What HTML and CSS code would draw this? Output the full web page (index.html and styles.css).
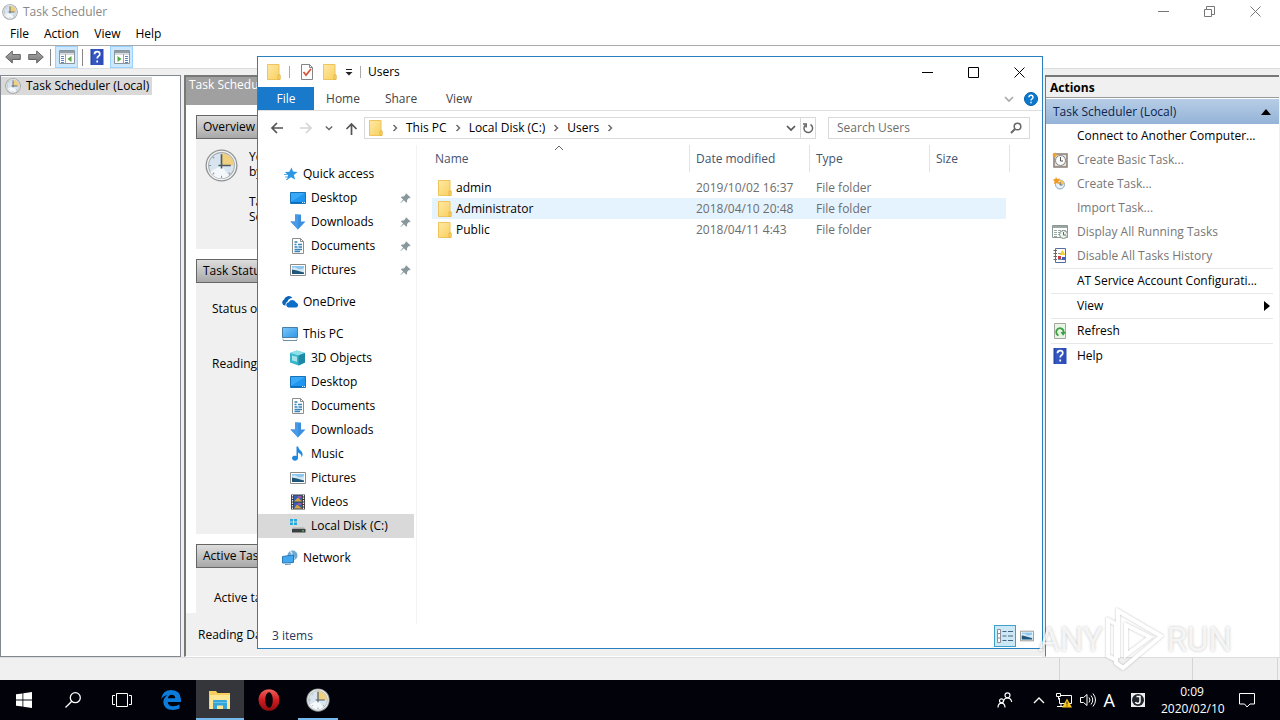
FILE: index.html
```html
<!DOCTYPE html>
<html lang="en">
<head>
  <meta charset="UTF-8">
  <meta name="viewport" content="width=device-width, initial-scale=1">
  <title>Task Scheduler</title>
  <link rel="stylesheet" href="styles.css">
</head>
<body>

  <!-- shared icons -->
  <svg class="sprite" aria-hidden="true">
    <defs>
      <linearGradient id="gFolder" x1="0" y1="0" x2="1" y2="1"><stop offset="0" stop-color="#ffe9a6"/><stop offset="1" stop-color="#f8cf5c"/></linearGradient>
      <linearGradient id="gScreen" x1="0" y1="0" x2="1" y2="1"><stop offset="0" stop-color="#7cc8fb"/><stop offset="1" stop-color="#2d96e6"/></linearGradient>
      <linearGradient id="gHelp" x1="0" y1="0" x2="1" y2="0"><stop offset="0" stop-color="#1c3c9c"/><stop offset=".2" stop-color="#3659c4"/><stop offset="1" stop-color="#2b4bb4"/></linearGradient>
      <linearGradient id="gArrow" x1="0" y1="0" x2="0" y2="1"><stop offset="0" stop-color="#aaa"/><stop offset="1" stop-color="#777"/></linearGradient>
      <linearGradient id="gOpera" x1="0" y1="0" x2="0" y2="1"><stop offset="0" stop-color="#f0625c"/><stop offset=".5" stop-color="#d01c20"/><stop offset="1" stop-color="#8d0d10"/></linearGradient>
    </defs>
    <symbol id="clock" viewBox="0 0 32 32">
      <circle cx="16" cy="16" r="15.500" fill="#8d9194"/>
      <circle cx="16" cy="16" r="14.300" fill="#f3f3f0"/>
      <circle cx="16" cy="16" r="12.500" fill="#d8e5ef" stroke="#a6adb3"/>
      <path d="M16 16 5 22a12 12 0 0 0 18 4z" fill="#f4f8fb"/>
      <path d="M16 16V4a12 12 0 0 1 12 12z" fill="#efcf80"/>
      <path d="M16 5v14M13 16h12" stroke="#4e5a64" stroke-width="1.600"/>
      <path d="M16 26v2M4 16h2M7.500 7.500l1.500 1.500M24.500 24.500 23 23M7.500 24.500 9 23" stroke="#8a98a4"/>
    </symbol>
    <symbol id="folder" viewBox="0 0 16 16">
      <path d="M1.500.5H13V11h1v4.500H1.500z" fill="url(#gFolder)" stroke="#eec45b"/>
      <path d="M12 15.500V11h2v4.500z" fill="#ffd96b" stroke="#dfae3e" stroke-width=".7"/>
    </symbol>
    <symbol id="helpbook" viewBox="0 0 16 16">
      <path d="M1.500 0h13v16h-13z" fill="url(#gHelp)"/>
      <path d="M5.500 5.200q0-2.600 2.700-2.600 2.600 0 2.600 2.300 0 1.500-1.400 2.400-1.200.8-1.200 2.200M8.200 11.500v2" fill="none" stroke="#fff" stroke-width="1.700"/>
    </symbol>
    <symbol id="desktop" viewBox="0 0 16 16">
      <path d="M.5 2.500h15v11H.5z" fill="#1e96f0" stroke="#1673b8"/>
      <path d="M1 3h14L1 12z" fill="#39a8f8"/>
      <path d="M1 12.500h11" stroke="#0b6bbd"/><path d="M12 12.500h3" stroke="#d8efff" stroke-dasharray="1 1"/>
    </symbol>
    <symbol id="download" viewBox="0 0 16 16">
      <path d="M5 .5h6v7h4.500L8 15.500.5 7.500H5z" fill="#3a8fe0"/><path d="M5 .5h3v15L.5 7.500H5z" fill="#4b9ae5"/>
    </symbol>
    <symbol id="document" viewBox="0 0 16 16">
      <path d="M2.500.5h8l3 3v12h-11z" fill="#fff" stroke="#8d8d8d"/><path d="M10.500.5v3h3" fill="none" stroke="#8d8d8d"/>
      <path d="M4.500 4h3M4.500 6.500h2M8 6.500h4M4.500 9h3M8.500 9H12M4.500 11.500H12M4.500 13.500H10" stroke="#3483bd" stroke-width="1.300"/>
    </symbol>
    <symbol id="picture" viewBox="0 0 16 16">
      <path d="M.5 2.500h15v11H.5z" fill="#fff" stroke="#8b8b8b"/>
      <path d="M2 4h12v8H2z" fill="#8cc5ee"/><path d="M2 6q3-2 6 1 3 1 6-1V12H2z" fill="#d4e9f6"/><path d="M2 7.500q4 .5 12 3V12H2z" fill="#1f5679"/>
    </symbol>
    <symbol id="pc" viewBox="0 0 16 16">
      <path d="M.5 1.500h15v10H.5z" fill="url(#gScreen)" stroke="#4a7da5"/><path d="M1 14.500h14" stroke="#6d91ad"/><path d="M0 13.200h2M14 13.200h2" stroke="#a9c4d8"/>
    </symbol>
    <symbol id="pin" viewBox="0 0 12 12">
      <path d="m7 .5 4.500 4.500-1 .7-.9-.2-1.900 2 .1 2-1 1-2.500-2.600-3.400 3-.4-.4 3-3.400L1 4.800l1-1 2 .1 2-1.900-.2-.8z" fill="#8a979f"/>
    </symbol>
    <symbol id="chev" viewBox="0 0 8 8"><path d="M2.500 1 5.500 4l-3 3" fill="none" stroke="#6e6e6e" stroke-width="1.500"/></symbol>
    <symbol id="chevdown" viewBox="0 0 10 10"><path d="m1 3 4 4 4-4" fill="none" stroke="currentColor" stroke-width="1.700"/></symbol>
    <symbol id="pane" viewBox="0 0 16 16">
      <path d="M.5 1.500h15v13H.5z" fill="#fff" stroke="#8a949b"/><path d="M1 2h14v2H1z" fill="#929da5"/><path d="M1 5h14" stroke="#b2b8bc"/>
      <path d="M2 7.500h3M2 9.500h3M2 11.500h3M2 13.500h3" stroke="#5b85b4"/><path d="M6.500 5v9" stroke="#9ba4aa"/><path d="m12.500 7-4 3 4 3z" fill="#57a744"/>
    </symbol>
    <symbol id="cliparrow" viewBox="0 0 16 14"><path d="m.7 7 6.600-6v3.500h8v5h-8V13z" fill="url(#gArrow)" stroke="#666"/></symbol>
  </svg>

  <div class="desktop">

    <main class="scheduler">
      <header class="titlebar">
        <svg class="icon"><use href="#clock"/></svg>
        <span>Task Scheduler</span>
        <div class="winbuttons">
          <button aria-label="Minimize"><svg viewBox="0 0 11 11"><path d="M0 5.500h11"/></svg></button>
          <button aria-label="Restore"><svg viewBox="0 0 11 11"><path d="M.5 3.500h7v7h-7zM2.500 3.500v-3h8v8h-3"/></svg></button>
          <button aria-label="Close"><svg viewBox="0 0 11 11"><path d="m.5.500 10 10m0-10-10 10"/></svg></button>
        </div>
      </header>

      <nav class="menubar">
        <button>File</button><button>Action</button><button>View</button><button>Help</button>
      </nav>

      <div class="toolbar">
        <button aria-label="Back"><svg class="icon"><use href="#cliparrow"/></svg></button>
        <button aria-label="Forward"><svg class="icon flip"><use href="#cliparrow"/></svg></button>
        <span class="sep"></span>
        <button class="on" aria-label="Show console tree"><svg class="icon"><use href="#pane"/></svg></button>
        <span class="sep"></span>
        <button aria-label="Help"><svg class="icon"><use href="#helpbook"/></svg></button>
        <button class="on" aria-label="Show action pane"><svg class="icon flip"><use href="#pane"/></svg></button>
      </div>

      <div class="panes">
        <aside class="tree">
          <button class="tree-item"><svg class="icon"><use href="#clock"/></svg>Task Scheduler (Local)</button>
        </aside>

        <section class="summary">
          <h2>Task Scheduler</h2>
          <div class="cards">
            <section class="card">
              <h3>Overview of</h3>
              <div class="card-body overview">
                <svg class="bigclock"><use href="#clock"/></svg>
                <div>
                  <p>You<br>by</p>
                  <p>Tasks<br>See</p>
                </div>
              </div>
            </section>
            <section class="card grow">
              <h3>Task Status</h3>
              <div class="card-body status">
                <p>Status of</p>
                <p>Reading</p>
              </div>
            </section>
            <section class="card last">
              <h3>Active Tasks</h3>
              <div class="card-body active">
                <p>Active tasks</p>
              </div>
            </section>
          </div>
          <footer>Reading Data</footer>
        </section>

        <aside class="actions">
          <h2>Actions</h2>
          <button class="group">Task Scheduler (Local)<svg viewBox="0 0 10 6"><path d="M0 6 5 0l5 6z"/></svg></button>
          <div class="action-list">
            <button><span class="slot"></span>Connect to Another Computer...</button>
            <button disabled><svg class="icon" viewBox="0 0 16 16"><path d="M2 2h13v13H2z" fill="#e2dfda" stroke="#897f78" stroke-width="1.500"/><circle cx="8.500" cy="8.500" r="5" fill="#fafafa" stroke="#858585"/><path d="M8.500 5v4H11" fill="none" stroke="#555"/><path d="m3 0 1 2.200L6 3 4 4 3 6 2 4 0 3l2-.8z" fill="#f7a427"/></svg>Create Basic Task...</button>
            <button disabled><svg class="icon" viewBox="0 0 16 16"><circle cx="8" cy="8.500" r="4.500" fill="#eaf2f8" stroke="#82a9c6"/><path d="M8 8.500V4a4.500 4.500 0 0 1 4.500 4.500z" fill="#f6c261"/><path d="M8 6v3h2.500" fill="none" stroke="#4c6d87"/><path d="m4 1 1.200 2L8 2.500 6.500 5 7 8 4.500 7 2 8l.5-2.500L1 3.500 3.200 3z" fill="#f29b21"/></svg>Create Task...</button>
            <button disabled><span class="slot"></span>Import Task...</button>
            <button disabled><svg class="icon" viewBox="0 0 16 16"><path d="M.5 1.500h15v12H.5z" fill="#fff" stroke="#8b9790"/><path d="M1 2h14v2H1z" fill="#9ba7a4"/><path d="M2 6.500h3m1 0h3m1 0h4M2 8.500h3m1 0h3M2 10.500h3m1 0h2M2 12.500h3" stroke="#9aa"/><circle cx="11.500" cy="10.500" r="4" fill="#eef3ee" stroke="#819183"/><path d="M11.500 8v3H14" fill="none" stroke="#5c705f"/></svg>Display All Running Tasks</button>
            <button disabled><svg class="icon" viewBox="0 0 16 16"><path d="M3.500.5h10v14h-10z" fill="#fff" stroke="#596d9b"/><path d="M1.500 2.500H5M1.500 5.500H5M1.500 8.500H5M1.500 11.500H5" stroke="#666"/><path d="M6 11.500h6M6 5.500h3M6 8.500h2" stroke="#7b8cb1"/><path d="m10.500 2 3 5h-6z" fill="#f2ce2e"/><path d="M6 8h3v3H6z" fill="#cc3a40"/><path d="M10 9h3v3h-3z" fill="#3f5fae"/></svg>Disable All Tasks History</button>
            <hr>
            <button><span class="slot"></span>AT Service Account Configurati...</button>
            <hr>
            <button><span class="slot"></span>View<svg class="more" viewBox="0 0 6 10"><path d="m0 0 6 5-6 5z"/></svg></button>
            <hr>
            <button><svg class="icon" viewBox="0 0 16 16"><path d="M2.500.5h11v15h-11z" fill="#e8f4e4" stroke="#a0a8a0"/><path d="M6.500 12.500q-3-1.500-2-5 1.500-3 4.500-2.200 3 1 2.500 4.200" fill="none" stroke="#3ba044" stroke-width="1.800"/><path d="M8.500 9h5.500l-3 3.700z" fill="#3ba044"/></svg>Refresh</button>
            <hr>
            <button><svg class="icon"><use href="#helpbook"/></svg>Help</button>
          </div>
        </aside>
      </div>

      <div class="statusbar"><span></span><span></span></div>
    </main>

    <section class="explorer">
      <header class="ex-title">
        <svg class="icon"><use href="#folder"/></svg>
        <span class="sep"></span>
        <button aria-label="Properties"><svg class="icon" viewBox="0 0 16 16"><path d="M2.500.5h8l3 3v12h-11z" fill="#fff" stroke="#858585"/><path d="M10.500.5v3h3" fill="none" stroke="#858585"/><path d="m4.500 8 2.500 3 5-6" fill="none" stroke="#d8573c" stroke-width="1.800"/></svg></button>
        <button aria-label="New folder"><svg class="icon"><use href="#folder"/></svg></button>
        <button class="customize" aria-label="Customize toolbar"><svg viewBox="0 0 8 8"><path d="M1 1.500h6" stroke="#222"/><path d="M.5 4h7L4 7.500z" fill="#222"/></svg></button>
        <span class="sep"></span>
        <span>Users</span>
        <div class="winbuttons">
          <button aria-label="Minimize"><svg viewBox="0 0 11 11"><path d="M0 5.500h11"/></svg></button>
          <button aria-label="Maximize"><svg viewBox="0 0 11 11"><path d="M.5.500h10v10H.5z"/></svg></button>
          <button aria-label="Close"><svg viewBox="0 0 11 11"><path d="m.5.500 10 10m0-10-10 10"/></svg></button>
        </div>
      </header>

      <nav class="ribbon">
        <button class="file">File</button><button>Home</button><button>Share</button><button>View</button>
        <div class="ribbon-right">
          <svg class="expand"><use href="#chevdown"/></svg>
          <svg class="helpdot" viewBox="0 0 14 14"><circle cx="7" cy="7" r="6.500" fill="#0b78cf" stroke="#075fa8"/><path d="M5 5.300Q5 3.300 7 3.300t2 1.900Q9 6.200 8 6.800 7 7.300 7 8.500M7 9.700v1.500" fill="none" stroke="#fff" stroke-width="1.400"/></svg>
        </div>
      </nav>

      <div class="address-row">
        <button class="back" aria-label="Back"><svg viewBox="0 0 14 12"><path d="M13 6H2m5-5L2 6l5 5"/></svg></button>
        <button class="forward" aria-label="Forward"><svg viewBox="0 0 14 12"><path d="M1 6h11M7 1l5 5-5 5"/></svg></button>
        <button class="recent" aria-label="Recent"><svg><use href="#chevdown"/></svg></button>
        <button class="up" aria-label="Up"><svg viewBox="0 0 12 13"><path d="M6 13V2M1 7l5-5 5 5"/></svg></button>
        <div class="address">
          <svg class="icon"><use href="#folder"/></svg>
          <svg class="chev"><use href="#chev"/></svg>
          <button>This PC</button>
          <svg class="chev"><use href="#chev"/></svg>
          <button>Local Disk (C:)</button>
          <svg class="chev"><use href="#chev"/></svg>
          <button>Users</button>
          <svg class="chev"><use href="#chev"/></svg>
          <button class="drop" aria-label="Previous locations"><svg><use href="#chevdown"/></svg></button>
          <button class="reload" aria-label="Refresh"><svg viewBox="0 0 12 12"><path d="M8.500 2.500A4.300 4.300 0 1 1 3.200 3.200M1 2h3.200v3.500" fill="none" stroke="#666" stroke-width="1.500"/></svg></button>
        </div>
        <label class="search">
          <input type="text" placeholder="Search Users" aria-label="Search Users">
          <svg viewBox="0 0 12 12"><circle cx="7.500" cy="4.500" r="3.300" fill="none" stroke="#666" stroke-width="1.500"/><path d="M5 7 1 11" stroke="#666" stroke-width="2"/></svg>
        </label>
      </div>

      <div class="ex-body">
        <nav class="places">
          <ul>
            <li class="root"><svg class="icon" viewBox="0 0 16 16"><path d="m9.500 1.500 1.500 4 4.500.5-3.700 3 1.400 4.500L9 11.200l-4 2.500L6 9 3 6l4.400-.3z" fill="#2b97e4"/><path d="M2 8.500h4M3 11h3M4 13.500h2" stroke="#57b0ef"/></svg>Quick access</li>
            <li><svg class="icon"><use href="#desktop"/></svg>Desktop<svg class="pin"><use href="#pin"/></svg></li>
            <li><svg class="icon"><use href="#download"/></svg>Downloads<svg class="pin"><use href="#pin"/></svg></li>
            <li><svg class="icon"><use href="#document"/></svg>Documents<svg class="pin"><use href="#pin"/></svg></li>
            <li><svg class="icon"><use href="#picture"/></svg>Pictures<svg class="pin"><use href="#pin"/></svg></li>
          </ul>
          <ul>
            <li class="root"><svg class="icon" viewBox="0 0 16 16"><path d="M3.500 11.500H2.800A3 3 0 0 1 2 5.800 4.800 4.800 0 0 1 10.500 4q-4 .2-5 3.500-2.300.8-2 4z" fill="#0a64b8"/><path d="M7 13.500a2.600 2.600 0 0 1-.3-5.200A4 4 0 0 1 14 8.500a2.600 2.600 0 0 1 .3 5z" fill="#0a6fcb"/></svg>OneDrive</li>
          </ul>
          <ul>
            <li class="root"><svg class="icon"><use href="#pc"/></svg>This PC</li>
            <li><svg class="icon" viewBox="0 0 16 16"><path d="m0 3 7-2.500L15 3v9.500L8.500 15.500 0 12.500z" fill="#37b5c9"/><path d="m0 3 7-2.500L15 3 8.500 5.500z" fill="#8ee0e8"/><path d="M8.500 5.500 15 3v9.500l-6.500 3z" fill="#1d8aa5"/><path d="m2 5.500 5 1.300v5L2 10.500z" fill="#a5e3ea"/></svg>3D Objects</li>
            <li><svg class="icon"><use href="#desktop"/></svg>Desktop</li>
            <li><svg class="icon"><use href="#document"/></svg>Documents</li>
            <li><svg class="icon"><use href="#download"/></svg>Downloads</li>
            <li><svg class="icon" viewBox="0 0 16 16"><path d="M6.500.5H8q.5 2.500 3 4.500 3 3 .5 6.500.5-3.500-3.500-5V12a3 2.500 0 1 1-1.500-2z" fill="#1e88e0"/></svg>Music</li>
            <li><svg class="icon"><use href="#picture"/></svg>Pictures</li>
            <li><svg class="icon" viewBox="0 0 16 16"><path d="M1 .5h14v15H1z" fill="#3a3a3a"/><path d="M2.500 1v14M13.500 1v14" stroke="#eee" stroke-width="1.200" stroke-dasharray="1.500 1"/><path d="M4 1.500h8v6H4zM4 8.500h8v6H4z" fill="#355fb5"/><path d="m4 7.500 4-4 4 4zM4 14.500l3-4 5 4z" fill="#d9a53a"/><path d="M8 2h3v2H8zM8 9h3v2H8z" fill="#8f5bb0"/></svg>Videos</li>
            <li class="selected"><svg class="icon" viewBox="0 0 16 16"><path d="M0 1h3v2.500H0zM4 1h3v2.500H4zM0 4.500h3V7H0zM4 4.500h3V7H4z" fill="#23a8df"/><path d="m3 9.500 11 0 1.500 2H2z" fill="#a7aaac"/><path d="M2 11h13.500v3.500H2z" fill="#3c3f42"/><path d="M12 12.800h2" stroke="#67d36f"/></svg>Local Disk (C:)</li>
          </ul>
          <ul>
            <li class="root"><svg class="icon" viewBox="0 0 16 16"><circle cx="10.500" cy="5.500" r="5" fill="#70a9d0"/><path d="M8 1.500q3 1 1 4 3 0 3 4" fill="none" stroke="#cde4f2" stroke-width="1.500"/><path d="M.5 6.500 11.500 5v7.500l-11 .5z" fill="#41a8ef" stroke="#2978b5"/><path d="m3 14.500 6-.5" stroke="#5a8db2"/></svg>Network</li>
          </ul>
        </nav>

        <div class="files">
          <table>
            <thead>
              <tr><th class="name">Name<svg class="sort" viewBox="0 0 10 6"><path d="m1 5 4-4 4 4" fill="none" stroke="#666"/></svg></th><th class="mid">Date modified</th><th class="mid">Type</th><th class="size">Size</th></tr>
            </thead>
            <tbody>
              <tr><td><svg class="icon"><use href="#folder"/></svg>admin</td><td>2019/10/02 16:37</td><td>File folder</td><td></td></tr>
              <tr class="hover"><td><svg class="icon"><use href="#folder"/></svg>Administrator</td><td>2018/04/10 20:48</td><td>File folder</td><td></td></tr>
              <tr><td><svg class="icon"><use href="#folder"/></svg>Public</td><td>2018/04/11 4:43</td><td>File folder</td><td></td></tr>
            </tbody>
          </table>
        </div>
      </div>

      <footer class="ex-status">
        <span>3 items</span>
        <button class="on" aria-label="Details view"><svg viewBox="0 0 16 14"><path d="M.5.500h3v13h-3zM.5 4.500h3M.5 9h3" fill="#fff" stroke="#8d8d98"/><path d="M5.500 2.500h4m1.500 0h5M5.500 7h4M11 7h5M5.500 11.500h4m1.500 0h5" stroke="#49647e"/></svg></button>
        <button aria-label="Large icons view"><svg class="thumb"><use href="#picture"/></svg></button>
      </footer>
    </section>

    <div class="watermark">
      <span>ANY</span>
      <svg viewBox="0 0 58 64"><path d="M12 50V3l43 25-38 32-7-5V16L2 12v36l8 4M20 17v30l24-18z"/></svg>
      <span>RUN</span>
    </div>
  </div>

  <footer class="taskbar">
    <button aria-label="Start"><svg viewBox="0 0 16 16"><path d="m0 2.300 6.500-.9v6.200H0zM7.300 1.300 16 0v7.600H7.300zM0 8.400h6.500v6.200L0 13.700zM7.300 8.400H16V16l-8.700-1.300z" fill="#fff"/></svg></button>
    <button aria-label="Search"><svg viewBox="0 0 16 16"><circle cx="10.300" cy="5.700" r="5" fill="none" stroke="#fff" stroke-width="1.300"/><path d="M6.800 9.200.5 15.500" stroke="#fff" stroke-width="1.300"/></svg></button>
    <button aria-label="Task view"><svg class="w20" viewBox="0 0 20 16"><path d="M4.500 1.500h11v13h-11zM3 3.500H.5v9H3M17 3.500h2.500v9H17" fill="none" stroke="#fff"/></svg></button>
    <button aria-label="Edge"><svg class="w20" viewBox="0 0 20 20"><path d="M0 9.200Q1.500 0 10.500 0 19.500.3 20 9.500V12H6.700q.5 4.300 5.600 4.300 3.300 0 6.200-1.700v4Q15.500 20 12 20 2.500 19.800 2.300 12 2.400 7.800 6.500 5.300 2.800 5.500 0 9.200zM6.900 8.300h7.300Q14.200 4.700 10.700 4.700 7.400 4.800 6.900 8.300z" fill="#0b7bdc"/></svg></button>
    <button class="current" aria-label="File Explorer"><svg class="w22" viewBox="0 0 22 20"><path d="M0 2V1h7l1.500 2H21v16H0z" fill="#f5ce5c"/><path d="M1 5h20v14H1z" fill="#fce694"/><path d="M4 19v-8q0-1 1-1h12q1 0 1 1v8h-4v-3.500H8V19z" fill="#35a5db"/><path d="M4 12h14v1H4z" fill="#67c1e8"/></svg></button>
    <button aria-label="Opera"><svg class="w22" viewBox="0 0 22 22"><ellipse cx="11" cy="11" rx="10.500" ry="10.800" fill="url(#gOpera)"/><ellipse cx="11" cy="11" rx="3.800" ry="7.800" fill="#070309"/></svg></button>
    <button class="running" aria-label="Task Scheduler"><svg class="w24"><use href="#clock"/></svg></button>

    <div class="tray">
      <svg class="people" viewBox="0 0 16 16"><g fill="none" stroke="#fff" stroke-width="1.200"><circle cx="10.500" cy="3.300" r="2.500"/><path d="M6.500 9.500q.5-3.500 4-3.500t4.200 4"/><circle cx="4.500" cy="8.800" r="2"/><path d="M1 15.500q.2-4.300 3.500-4.300T8 15.500"/></g></svg>
      <svg class="up" viewBox="0 0 12 8"><path d="m1 7 5-5 5 5" fill="none" stroke="#fff" stroke-width="1.300"/></svg>
      <svg viewBox="0 0 16 16"><path d="M4 3.500h11.500v8H3.500V6M1 14.500h7M5 12v2" fill="none" stroke="#fff"/><path d="M.5 1.500h4v3h-4zM2.500 4.500v3" fill="#000" stroke="#fff"/><path d="m11 6.500 5 9H6z" fill="#f8c51c"/><path d="M11 9.500v3m0 1v1" stroke="#222"/></svg>
      <svg viewBox="0 0 16 16"><path d="M.5 5.500h3l3.500-3v11l-3.500-3h-3z" fill="none" stroke="#fff"/><path d="M9 5.500q2 2.500 0 5m2-7q3.500 4.500 0 9m2-11q5 6.500 0 13" fill="none" stroke="#fff"/></svg>
      <span class="ime">A</span>
      <svg class="j" viewBox="0 0 14 14"><path d="M0 0h14v14H0z" fill="#eee"/><circle cx="7" cy="7" r="6" fill="#20242b"/><path d="M5.500 3.500H9V8q0 2.500-2.300 2.500Q5 10.500 4.500 9" fill="none" stroke="#fff" stroke-width="1.500"/></svg>
      <div class="time">0:09<br>2020/02/10</div>
      <svg class="note" viewBox="0 0 16 16"><path d="M.5 1.500h15V12H11l-3 3-2.500-3h-5z" fill="none" stroke="#fff"/></svg>
    </div>
  </footer>

</body>
</html>
```
FILE: styles.css
```css
* { box-sizing: border-box; }
html, body { height: 100%; }
body {
  margin: 0;
  display: flex;
  flex-direction: column;
  overflow: hidden;
  font: 12px/16px "Open Sans", "Noto Sans", sans-serif;
  color: #000;
}
button { border: 0; padding: 0; margin: 0; background: none; font: inherit; color: inherit; }
h2, h3, p, ul { margin: 0; padding: 0; font-size: 12px; font-weight: normal; }
svg { flex: none; display: block; }
.sprite { width: 0; height: 0; position: absolute; }
.icon { width: 16px; height: 16px; }
.flip { transform: scaleX(-1); }

.desktop { flex: 1; min-height: 0; position: relative; }

/* Task Scheduler window */
.scheduler { height: 100%; display: flex; flex-direction: column; background: #f0f0f0; }
.titlebar { height: 23px; display: flex; align-items: center; gap: 5px; padding-left: 2px; background: #fff; color: #888; }
.winbuttons { margin-left: auto; display: flex; }
.winbuttons button { width: 46px; height: 22px; display: flex; align-items: center; justify-content: center; }
.winbuttons svg { width: 11px; height: 11px; fill: none; stroke: #777; }
.titlebar .winbuttons { padding-right: 2px; }
.menubar { height: 23px; display: flex; align-items: center; gap: 15px; padding-left: 10px; background: #fff; border-bottom: 1px solid #aaa; }
.toolbar { height: 23px; display: flex; align-items: center; gap: 3px; padding-left: 3px; background: #fff; border-bottom: 1px solid #ddd; }
.toolbar button { width: 20px; height: 22px; display: flex; align-items: center; justify-content: center; }
.toolbar .on { width: 23px; background: #cce8ff; border: 1px solid #99d1ff; }
.toolbar .sep { width: 1px; height: 17px; margin: 0 1px; background: #888; }

.panes { flex: 1; min-height: 0; display: flex; gap: 3px; padding: 6px 1px 0 0; }
.tree { width: 181px; background: #fff; border: 1px solid #828790; }
.tree-item { display: flex; align-items: center; gap: 5px; height: 18px; margin-top: 1px; padding: 0 3px 0 4px; background: #d9d9d9; white-space: nowrap; }

.summary { flex: 1; min-width: 0; display: flex; flex-direction: column; border: solid #777; border-width: 2px 0 0 2px; border-bottom: 1px solid #fff; }
.summary h2 { height: 28px; padding-left: 3px; background: #a0a0a0; color: #fff; }
.cards { flex: 1; display: flex; flex-direction: column; gap: 10px; padding: 10px 10px 0; background: #fff; }
.card { display: flex; flex-direction: column; }
.card h3 { height: 24px; padding: 3px 6px; background: linear-gradient(#dedede, #a8a8a8); border: 1px solid #666; }
.card-body { flex: 1; background: #f0f0f0; }
.card.grow { flex: 1; }
.overview { display: flex; gap: 11px; padding: 10px 9px 25px; line-height: 15px; }
.overview p + p { margin-top: 15px; }
.bigclock { width: 33px; height: 33px; }
.status { padding: 18px 16px; }
.status p + p { margin-top: 39px; }
.active { padding: 22px 18px 7px; }
.summary footer { height: 43px; padding: 14px 12px; }

.actions { width: 234px; background: #fff; border: solid #777; border-width: 2px 0 0 1px; border-bottom: 1px solid #fff; }
.actions h2 { height: 21px; padding: 3px 4px 0; background: #f0f0f0; border-bottom: 1px solid #999; font-weight: bold; }
.group { width: 100%; height: 26px; display: flex; align-items: center; justify-content: space-between; padding: 0 8px 0 7px; background: linear-gradient(#b7cde6, #94b3d7); border-top: 1px solid #fff; color: #0c2450; }
.group svg { width: 10px; height: 6px; fill: #000; }
.action-list button { width: 100%; height: 24px; display: flex; align-items: center; gap: 9px; padding-left: 6px; white-space: nowrap; }
.action-list button:disabled { color: #777; }
.action-list hr { height: 1px; margin: 0 6px 0 5px; border: 0; background: #e8e8e8; }
.slot { width: 16px; }
.more { width: 6px; height: 10px; margin-left: auto; margin-right: 9px; }

.statusbar { height: 23px; display: flex; justify-content: flex-end; padding-right: 2px; border-top: 1px solid #ddd; }
.statusbar span { width: 133px; border-left: 1px solid #d5d5d5; }
.statusbar span:last-child { width: 86px; border-right: 1px solid #d5d5d5; }

/* Explorer window */
.explorer {
  position: absolute;
  top: 56px; left: 257px; right: 237px; bottom: 31px;
  display: flex;
  flex-direction: column;
  background: #fff;
  border: 1px solid #2a7fc0;
}
.ex-title { height: 30px; display: flex; align-items: center; gap: 7px; padding-left: 8px; }
.ex-title .sep { width: 1px; height: 12px; background: #aaa; }
.ex-title > .sep + button { margin-left: 2px; }
.customize { width: 8px; }
.customize svg { width: 8px; height: 8px; }
.ex-title .winbuttons svg { stroke: #000; }
.ribbon { height: 24px; display: flex; border-bottom: 1px solid #dedede; color: #444; }
.ribbon button { width: 58px; }
.ribbon .file { width: 56px; background: #1979ca; color: #fff; }
.ribbon-right { margin-left: auto; display: flex; align-items: center; gap: 10px; padding-right: 4px; color: #aaa; }
.expand { width: 10px; height: 10px; }
.helpdot { width: 14px; height: 14px; }

.address-row { height: 34px; display: flex; align-items: center; padding: 0 12px; }
.address-row > button { display: flex; }
.address-row > button svg { fill: none; stroke: #555; stroke-width: 1.7; width: 14px; height: 12px; }
.address-row .forward { margin-left: 15px; }
.address-row .forward svg { stroke: #d5d5d5; }
.address-row .recent { margin-left: 12px; color: #666; }
.address-row .recent svg { width: 8px; height: 8px; stroke: none; }
.address-row .up { margin-left: 12px; margin-right: 6px; }
.address-row .up svg { width: 13px; height: 13px; }
.address { flex: 1; height: 22px; display: flex; align-items: center; padding-left: 3px; border: 1px solid #d9d9d9; }
.chev { width: 8px; height: 8px; margin: 0 7px; }
.drop { margin-left: auto; padding-right: 4px; color: #555; }
.drop svg { width: 10px; height: 10px; }
.reload { height: 20px; padding: 0 1px; border-left: 1px solid #d9d9d9; }
.reload svg { width: 12px; height: 12px; }
.search { width: 202px; height: 22px; margin-left: 12px; display: flex; align-items: center; padding: 0 7px 0 8px; border: 1px solid #d9d9d9; }
.search input { flex: 1; min-width: 0; border: 0; padding: 0; font: inherit; outline: 0; }
.search input::placeholder { color: #6d6d6d; opacity: 1; }
.search svg { width: 12px; height: 12px; }

.ex-body { flex: 1; min-height: 0; display: flex; }
.places { width: 159px; padding-top: 17px; border-right: 1px solid #f3f3f3; }
.places ul { list-style: none; margin-bottom: 8px; }
.places li { height: 24px; display: flex; align-items: center; gap: 5px; margin-right: 2px; padding-left: 32px; }
.places li.root { padding-left: 24px; }
.places .selected { background: #d9d9d9; }
.pin { width: 11px; height: 11px; margin-left: auto; margin-right: 3px; }
.files { flex: 1; padding-left: 15px; }
.files table { border-collapse: separate; border-spacing: 0; table-layout: fixed; width: 578px; }
.files th { height: 27px; padding: 0 6px; border-right: 1px solid #e3e3e3; text-align: left; font-weight: normal; color: #44546f; }
.files .name { width: 258px; padding-left: 3px; position: relative; }
.files .mid { width: 120px; }
.files .size { width: 80px; }
.sort { position: absolute; top: 0; left: 122px; width: 10px; height: 6px; }
.files tbody::before { content: ""; display: block; height: 5px; }
.files td { height: 21px; padding: 0 6px; color: #6d6d6d; }
.files td:first-child { display: flex; align-items: center; gap: 3px; padding-left: 5px; color: #000; }
.files td:last-child { border-right: 4px solid #fff; }
.hover td { background: #e5f3ff; }
.ex-status { height: 24px; display: flex; align-items: center; padding: 0 4px 0 14px; color: #23395d; }
.ex-status span { flex: 1; }
.ex-status button { width: 22px; height: 22px; display: flex; align-items: center; justify-content: center; }
.ex-status .on { background: #cce8f4; border: 1px solid #42a0c8; }
.ex-status button svg { width: 16px; height: 14px; }
.ex-status .thumb { width: 14px; height: 14px; }

.watermark {
  position: absolute;
  right: 48px; bottom: 8px;
  display: flex;
  align-items: center;
  gap: 3px;
  font: 33px/64px Roboto, sans-serif;
  color: rgba(255, 255, 255, .8);
  text-shadow: 0 0 3px rgba(0, 0, 0, .25);
}
.watermark svg { width: 58px; height: 64px; fill: none; stroke: #fff; stroke-width: 4; filter: drop-shadow(0 0 1px rgba(0, 0, 0, .25)); }

/* Taskbar */
.taskbar { height: 40px; display: flex; background: #01020a; color: #fff; }
.taskbar > button { width: 48px; margin-right: 1px; display: flex; align-items: center; justify-content: center; border: solid transparent; border-width: 2px 0; }
.taskbar > button svg { width: 16px; height: 16px; }
.taskbar > button .w20 { width: 20px; height: 20px; }
.taskbar > button .w22 { width: 22px; height: 22px; }
.taskbar > button .w24 { width: 24px; height: 24px; }
.taskbar > .current { background: #35363c; border-top-color: #35363c; border-bottom-color: #76b9ed; }
.taskbar > .running { width: 40px; margin-left: 4px; border-bottom-color: #76b9ed; }
.tray { margin-left: auto; display: flex; align-items: center; gap: 8px; padding-right: 25px; }
.tray svg { width: 16px; height: 16px; }
.tray .people { margin-right: 12px; }
.tray .up { width: 12px; height: 8px; margin-right: 3px; }
.ime { font-size: 18px; line-height: 24px; }
.tray .j { width: 14px; height: 14px; margin: 0 8px; }
.time { width: 62px; text-align: center; line-height: 17px; }
.tray .note { margin-left: 8px; }
```
